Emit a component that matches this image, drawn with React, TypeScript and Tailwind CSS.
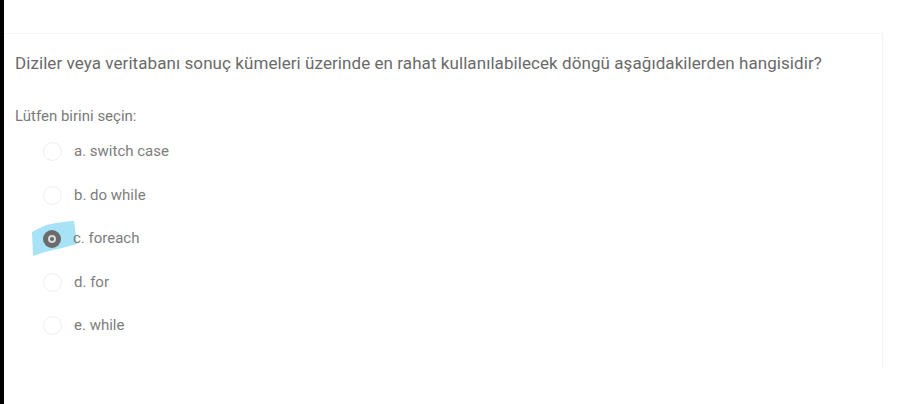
import { useState } from 'react';

const options = ['a. switch case', 'b. do while', 'c. foreach', 'd. for', 'e. while'];

function Radio({ checked }: { checked: boolean }) {
  if (checked) {
    return (
      <span className="relative flex h-[18px] w-[18px] items-center justify-center">
        {/* marker highlight */}
        <svg className="absolute left-[-12px] top-[-10px]" width="50" height="40" viewBox="0 0 50 40">
          <path d="M1 12 C8 8 14 5 20 4 C30 2 38 1 43 1 L46 24 C36 27 26 29 18 31 C10 33 5 35 2 36 Z" fill="#a7e2f6" />
        </svg>
        <span className="relative flex h-[18px] w-[18px] items-center justify-center rounded-full bg-[#6b6b6b]">
          <span className="flex h-[8px] w-[8px] items-center justify-center rounded-full bg-[#d9d9d9]">
            <span className="h-[4px] w-[4px] rounded-full bg-[#6b6b6b]" />
          </span>
        </span>
      </span>
    );
  }
  return <span className="h-[19px] w-[19px] rounded-full border border-[#eeeeee] bg-white" />;
}

export default function App() {
  const [selected, setSelected] = useState(2);

  return (
    <div className="flex h-[404px] w-[898px] bg-white font-['Roboto',sans-serif]">
      <div className="w-[4px] shrink-0 bg-black" />
      <div className="flex-1 pt-[33px]">
        <div className="h-[336px] w-[879px] border-t border-r border-[#f4f4f4] pl-[11px] pt-[17px]">
          <p className="text-[17px] leading-[24px] tracking-[0.07px] text-[#6a6a6a]">
            Diziler veya veritabanı sonuç kümeleri üzerinde en rahat kullanılabilecek döngü aşağıdakilerden hangisidir?
          </p>
          <p className="mt-[31px] text-[15px] leading-[20px] text-[#7a7a7a]">Lütfen birini seçin:</p>
          <div className="mt-[16px] flex flex-col gap-[24.5px] pl-[28px]">
            {options.map((opt, i) => (
              <label
                key={opt}
                onClick={() => setSelected(i)}
                className="flex h-[19px] cursor-pointer items-center gap-[12px]"
              >
                <Radio checked={selected === i} />
                <span className="relative text-[15px] leading-[19px] text-[#7d7d7d]">{opt}</span>
              </label>
            ))}
          </div>
        </div>
      </div>
    </div>
  );
}
